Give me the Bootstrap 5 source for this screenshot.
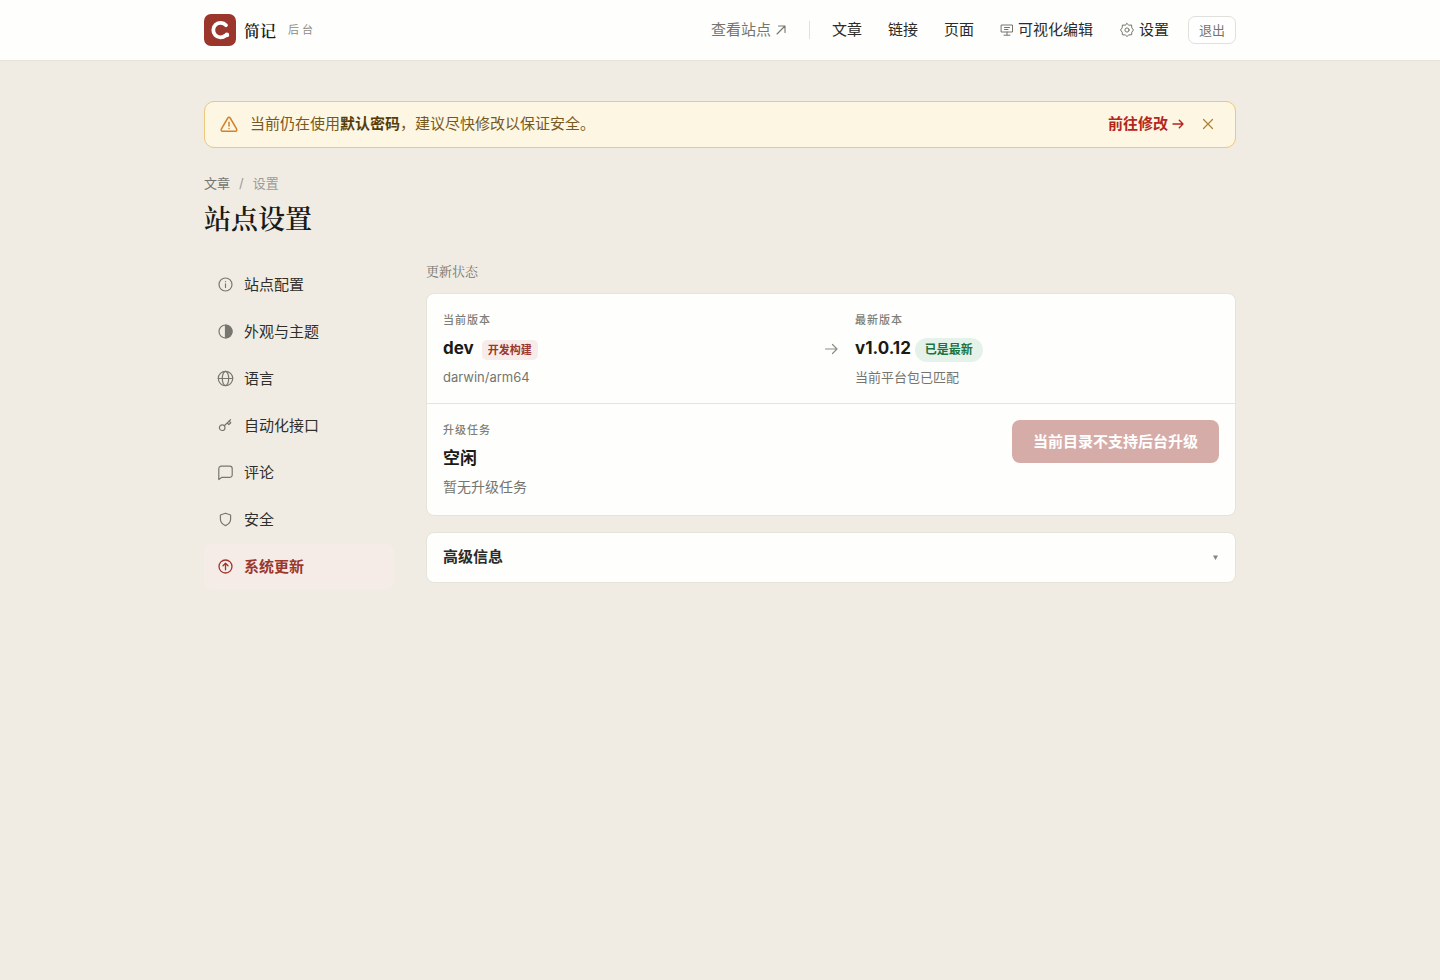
<!DOCTYPE html>
<html lang="zh-CN">
<head>
<meta charset="utf-8">
<meta name="viewport" content="width=device-width, initial-scale=1">
<title>站点设置</title>
<link href="https://cdn.jsdelivr.net/npm/bootstrap@5.3.0/dist/css/bootstrap.min.css" rel="stylesheet">
<style>
  :root { --brand: #9b362c; --ink: #1a1a17; --muted: #75756e; --faint: #8d8d85; --line: #e6e3d8; }
  body { font-family: Inter, "Noto Sans CJK SC", sans-serif; font-size: 15px; line-height: 24px; color: #2b2b28; background: #f0ece4; }
  .wrap { max-width: 1080px; padding: 0 24px; }
  .serif { font-family: "Liberation Serif", "Noto Serif CJK SC", "Noto Serif SC", "Noto Sans CJK SC", serif; }
  .site-head { background: #fefefd; border-bottom: 1px solid var(--line); }
  .bar { min-height: 60px; }
  .brand-name { font-size: 16px; font-weight: 600; color: var(--ink); }
  .brand-tag { font-size: 11px; letter-spacing: 3px; color: var(--faint); }
  .top-nav a { color: #2b2b28; text-decoration: none; }
  .top-nav { gap: 26px; }
  .top-nav svg { color: var(--muted); }
  .top-nav .view-site { color: var(--muted); }
  .rule { width: 1px; height: 18px; background: #e2e0da; margin: 0 -4px; }
  .btn-exit { font-size: 13px; line-height: 20px; padding: 3px 10px; color: var(--muted); border: 1px solid #e2e0da; border-radius: 7px; background: #fff; margin-left: -7px; }
  .page { padding-top: 40px; padding-bottom: 40px; }
  .notice { background: #fdf6e2; border: 1px solid #edc77a; border-radius: 10px; padding: 10px 15px 11px; color: #77591e; gap: 12px; }
  .notice strong { color: #553d0a; font-weight: 700; }
  .notice a { color: #b3261e; font-weight: 600; text-decoration: none; }
  .icon-warn { color: #d1822d; }
  .btn-dismiss { border: 0; background: none; padding: 0; width: 24px; height: 24px; color: #a98331; }
  .crumbs { font-size: 13px; line-height: 20px; margin-top: 25px; gap: 9px; color: #9b9b93; }
  .crumbs a { color: var(--muted); text-decoration: none; }
  .page-title { font-size: 27px; line-height: 40px; font-weight: 600; color: var(--ink); margin: 7px 0 0; }
  .settings { display: grid; grid-template-columns: 190px minmax(0, 1fr); gap: 32px; margin-top: 22px; }
  .side { gap: 2px; }
  .side a { display: flex; align-items: center; gap: 10px; height: 45px; padding: 0 13px; border-radius: 8px; color: #2f2f2b; text-decoration: none; }
  .side svg { color: #77776f; }
  .side a.active { background: #f5ece8; color: var(--brand); font-weight: 600; }
  .side a.active svg { color: var(--brand); }
  .sec-title { font-size: 13px; line-height: 20px; font-weight: 400; color: var(--muted); margin: 0 0 11px; }
  .panel { background: #fefefd; border: 1px solid var(--line); border-radius: 8px; }
  .versions { display: grid; grid-template-columns: 1fr 16px 1fr; gap: 16px; align-items: center; padding: 16px 16px 15px; border-bottom: 1px solid var(--line); }
  .icon-to { color: var(--faint); }
  .tag-line { font-size: 11px; line-height: 20px; letter-spacing: 1px; font-weight: 500; color: #7f7f77; }
  .value { font-size: 17px; line-height: 36px; height: 36px; font-weight: 700; color: var(--ink); }
  .note { font-size: 13px; line-height: 22px; color: var(--muted); }
  .note.big { font-size: 14px; }
  .pill-dev, .pill-ok { font-weight: 600; margin-top: 3px; }
  .pill-dev { font-size: 11px; line-height: 20px; color: var(--brand); background: #f8ecea; border-radius: 5px; padding: 0 6px; }
  .pill-ok { font-size: 12px; line-height: 24px; color: #1c7440; background: #e5f2ea; border-radius: 12px; padding: 0 10px; }
  .task { padding: 16px 16px 17px; }
  .btn-upgrade, .btn-upgrade:disabled { font-size: 15px; line-height: 23px; font-weight: 600; color: #fff; background: #d6aca8; border: 0; border-radius: 8px; padding: 10px 21px; }
  .more { margin-top: 16px; }
  .more summary { list-style: none; padding: 12px 16px 13px; font-weight: 600; }
  .more summary::-webkit-details-marker { display: none; }
  .icon-caret { color: #85857d; }
  svg { flex: none; fill: none; stroke: currentColor; stroke-linecap: round; stroke-linejoin: round; }
</style>
</head>
<body>
<header class="site-head">
  <div class="container-fluid wrap bar d-flex align-items-center justify-content-between">
    <a href="#" class="d-flex align-items-center text-decoration-none">
      <svg width="32" height="32" viewBox="0 0 32 32"><rect width="32" height="32" rx="7" fill="#9b362c" stroke="none"/><path d="M22 11.200A7.300 7.300 0 1 0 21.500 21.500" stroke="#fff" stroke-width="3.800"/><circle cx="22.900" cy="20.900" r="2.300" fill="#fff" stroke="none"/></svg>
      <span class="serif brand-name ms-2 pt-1">简记</span>
      <span class="brand-tag ms-2 ps-1">后台</span>
    </a>
    <nav class="top-nav d-flex align-items-center">
      <a href="#" class="view-site d-flex align-items-center gap-1">查看站点
        <svg width="12" height="12" viewBox="0 0 12 12" stroke-width="1.1"><path d="M2 10 10 2M3.5 2H10v6.5"/></svg></a>
      <span class="rule"></span>
      <a href="#">文章</a>
      <a href="#">链接</a>
      <a href="#">页面</a>
      <a href="#" class="d-flex align-items-center gap-1"><svg width="14" height="14" viewBox="0 0 14 14"><path d="M1.500 2h11v7h-11zM7 9v3M4 12.200h6M4.500 4.500h5M4.500 6.500h3.500"/></svg><span>可视化编辑</span></a>
      <a href="#" class="d-flex align-items-center gap-1"><svg width="16" height="16" viewBox="0 0 16 16"><path d="M8 1.500 9.800 3.200l2.800-.2.200 2.800L14.500 8l-1.700 2.200-.2 2.600-2.800.1L8 14.500l-1.800-1.600-2.800-.1-.2-2.600L1.500 8l1.700-2.200.2-2.800 2.800.2z"/><circle cx="8" cy="8" r="2.100"/></svg><span>设置</span></a>
      <button type="button" class="btn-exit">退出</button>
    </nav>
  </div>
</header>
<main class="container-fluid wrap page">
  <div class="notice d-flex align-items-center" role="alert">
    <svg class="icon-warn" width="18" height="18" viewBox="0 0 18 18" stroke-width="1.5"><path d="M7.800 3 1.300 14.200a1.400 1.400 0 0 0 1.200 2h13a1.400 1.400 0 0 0 1.200-2L10.200 3a1.400 1.400 0 0 0-2.400 0zM9 7.200v3.900M9 13.400v.2"/></svg>
    <div class="flex-grow-1">当前仍在使用<strong>默认密码</strong>，建议尽快修改以保证安全。</div>
    <a href="#" class="d-flex align-items-center gap-1">前往修改
      <svg width="12" height="12" viewBox="0 0 12 12" stroke-width="1.4"><path d="M1 6h10M7.3 2.3 11 6 7.3 9.7"/></svg></a>
    <button type="button" class="btn-dismiss d-flex align-items-center justify-content-center" aria-label="关闭"><svg width="12" height="12" viewBox="0 0 12 12" stroke-width="1.2"><path d="m1.5 1.5 9 9m0-9-9 9"/></svg></button>
  </div>
  <nav class="crumbs d-flex" aria-label="路径"><a href="#">文章</a><span>/</span><span>设置</span></nav>
  <h1 class="serif page-title">站点设置</h1>
  <div class="settings">
    <nav class="side d-flex flex-column">
      <a href="#"><svg width="17" height="17" viewBox="0 0 17 17" stroke-width="1.2"><circle cx="8.5" cy="8.5" r="6.5"/><path d="M8.5 7.8v3.6M8.5 5.5v.2"/></svg>站点配置</a>
      <a href="#"><svg width="17" height="17" viewBox="0 0 17 17" stroke-width="1.2"><circle cx="8.5" cy="8.5" r="6.5"/><path d="M8.5 2a6.5 6.5 0 0 1 0 13z" fill="currentColor"/></svg>外观与主题</a>
      <a href="#"><svg width="17" height="17" viewBox="0 0 17 17" stroke-width="1.2"><circle cx="8.5" cy="8.5" r="7.2"/><ellipse cx="8.5" cy="8.5" rx="3.2" ry="7.2"/><path d="M1.3 8.5h14.4"/></svg>语言</a>
      <a href="#"><svg width="17" height="17" viewBox="0 0 17 17" stroke-width="1.2"><circle cx="5.2" cy="10.700" r="2.800"/><path d="m7.300 8.700 6.200-6M10.200 6l1.600 1.500 2-1.800-1.700-1.600"/></svg>自动化接口</a>
      <a href="#"><svg width="17" height="17" viewBox="0 0 17 17" stroke-width="1.2"><path d="M1.800 15.500V4.600a2.500 2.500 0 0 1 2.500-2.500h8.400a2.500 2.500 0 0 1 2.500 2.500v6.300a2.500 2.500 0 0 1-2.500 2.500H4.600z"/></svg>评论</a>
      <a href="#"><svg width="17" height="17" viewBox="0 0 17 17" stroke-width="1.2"><path d="M8.500 2.200 13.600 4v4.300c0 3.100-2 5-5.100 6.300-3.100-1.300-5.100-3.200-5.100-6.300V4z"/></svg>安全</a>
      <a href="#" class="active" aria-current="page"><svg width="17" height="17" viewBox="0 0 17 17" stroke-width="1.3"><circle cx="8.5" cy="8.5" r="6.5"/><path d="M8.5 11.8V5.5M6 7.8l2.5-2.5L11 7.8"/></svg>系统更新</a>
    </nav>
    <section>
      <h2 class="serif sec-title">更新状态</h2>
      <div class="panel">
        <div class="versions">
          <div>
            <div class="tag-line">当前版本</div>
            <div class="value d-flex align-items-center gap-2">dev <span class="pill-dev">开发构建</span></div>
            <div class="note">darwin/arm64</div>
          </div>
          <svg class="icon-to" width="16" height="16" viewBox="0 0 16 16" stroke-width="1.2"><path d="M2.500 8h11.500M9.500 3.500 14 8l-4.500 4.500"/></svg>
          <div>
            <div class="tag-line">最新版本</div>
            <div class="value d-flex align-items-center gap-1">v1.0.12 <span class="pill-ok">已是最新</span></div>
            <div class="note">当前平台包已匹配</div>
          </div>
        </div>
        <div class="task d-flex align-items-start justify-content-between">
          <div>
            <div class="tag-line">升级任务</div>
            <div class="value">空闲</div>
            <div class="note big">暂无升级任务</div>
          </div>
          <button type="button" class="btn-upgrade" disabled>当前目录不支持后台升级</button>
        </div>
      </div>
      <details class="panel more">
        <summary class="d-flex align-items-center justify-content-between">高级信息
          <svg class="icon-caret" width="7" height="7" viewBox="0 0 7 7"><path d="M1 1.500h5L3.500 6z" fill="currentColor" stroke="none"/></svg></summary>
      </details>
    </section>
  </div>
</main>
<script src="https://cdn.jsdelivr.net/npm/bootstrap@5.3.0/dist/js/bootstrap.bundle.min.js"></script>
</body>
</html>
